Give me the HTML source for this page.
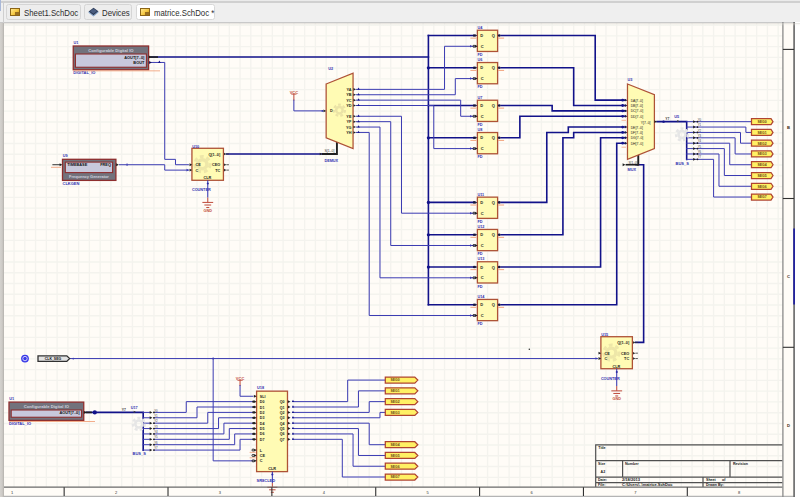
<!DOCTYPE html>
<html><head><meta charset="utf-8"><style>
html,body{margin:0;padding:0;width:800px;height:497px;overflow:hidden;background:#ffffff;}
body{position:relative;font-family:"Liberation Sans",sans-serif;}
#bar{position:absolute;left:0;top:0;width:800px;height:23px;background:#efefef;}
#bar:before{content:"";position:absolute;left:0;top:0;width:800px;height:1px;background:#ebebeb;}
#bar:after{content:"";position:absolute;left:0;top:1.4px;width:800px;height:1.2px;background:#d0d0d0;}
#barline{position:absolute;left:0;top:21.6px;width:800px;height:1.4px;background:#c9c9c9;}
#shadow{position:absolute;left:0;top:23px;width:800px;height:3px;background:linear-gradient(to bottom,rgba(200,198,192,0.55),rgba(230,228,222,0.25) 50%,rgba(255,253,248,0));}
.tab{position:absolute;top:3.7px;height:16.1px;box-sizing:border-box;border:1px solid #d5d5d5;border-radius:2.5px;background:#ededed;}
.tab.act{background:#ffffff;border-color:#d8d8d8;}
.tt{position:absolute;top:3.0px;font-size:8.6px;line-height:11px;color:#2c2c2c;white-space:nowrap;transform:scaleX(0.908);transform-origin:0 0;}
.ic{position:absolute;left:3.1px;top:3.3px;width:9.9px;height:7.9px;box-sizing:border-box;}
.ic.y{background:linear-gradient(135deg,#ffe890 0%,#f5c842 55%,#c89418 100%);border:1px solid #8a6418;}
.ic.y:after{content:"";position:absolute;right:0;bottom:0;width:4px;height:3px;background:#9a7020;}
.dv{position:absolute;left:3.5px;top:2.2px;}
#left{position:absolute;left:0;top:23px;width:4px;height:474px;background:linear-gradient(to right,#d4d2ce 0%,#cdcac6 55%,#b4b1ac 100%);}
#leftblue{position:absolute;left:0;top:0;width:0.9px;height:11px;background:#a9b8d8;}
#barleft{position:absolute;left:3.2px;top:1.5px;width:0.9px;height:21px;background:#cfcfcf;}
svg#sch{position:absolute;left:0;top:0;}
</style></head><body>
<div id="bar"></div><div id="barline"></div>
<div id="leftblue"></div><div id="barleft"></div>
<div class="tab" style="left:6.3px;width:74.4px;"><span class="ic y"></span><span class="tt" style="left:16.6px">Sheet1.SchDoc</span></div>
<div class="tab" style="left:83.7px;width:47.9px;"><svg class="dv" width="11" height="10" viewBox="0 0 11 10"><path d="M5.5 0.8L10.4 4.2L5.5 8.6L0.6 4.6Z" fill="#2b3a55"/><path d="M0.6 4.6L5.5 8.6L10.4 4.2L10.4 5.6L5.5 9.6L0.6 5.8Z" fill="#7a9cc8"/><path d="M5.5 1.5L9 4.1L5.5 6.8L2 4.3Z" fill="#4a5d80"/></svg><span class="tt" style="left:17.3px">Devices</span></div>
<div class="tab act" style="left:135.7px;width:79.8px;"><span class="ic y"></span><span class="tt" style="left:16.9px">matrice.SchDoc *</span></div>
<svg id="sch" width="800" height="497" viewBox="0 0 800 497">
<rect x="3.5" y="23" width="791" height="474" fill="#fffcf7"/>
<path d="M14.06 23V487 M24.82 23V487 M35.58 23V487 M46.35 23V487 M57.11 23V487 M67.87 23V487 M78.63 23V487 M89.39 23V487 M100.16 23V487 M110.92 23V487 M121.68 23V487 M132.44 23V487 M143.2 23V487 M153.97 23V487 M164.73 23V487 M175.49 23V487 M186.25 23V487 M197.01 23V487 M207.78 23V487 M218.54 23V487 M229.3 23V487 M240.06 23V487 M250.82 23V487 M261.59 23V487 M272.35 23V487 M283.11 23V487 M293.87 23V487 M304.63 23V487 M315.4 23V487 M326.16 23V487 M336.92 23V487 M347.68 23V487 M358.44 23V487 M369.21 23V487 M379.97 23V487 M390.73 23V487 M401.49 23V487 M412.25 23V487 M423.02 23V487 M433.78 23V487 M444.54 23V487 M455.3 23V487 M466.06 23V487 M476.83 23V487 M487.59 23V487 M498.35 23V487 M509.11 23V487 M519.87 23V487 M530.64 23V487 M541.4 23V487 M552.16 23V487 M562.92 23V487 M573.68 23V487 M584.45 23V487 M595.21 23V487 M605.97 23V487 M616.73 23V487 M627.49 23V487 M638.26 23V487 M649.02 23V487 M659.78 23V487 M670.54 23V487 M681.3 23V487 M692.07 23V487 M702.83 23V487 M713.59 23V487 M724.35 23V487 M735.11 23V487 M745.88 23V487 M756.64 23V487 M767.4 23V487 M778.16 23V487 M3 25.05H783 M3 35.82H783 M3 46.59H783 M3 57.35H783 M3 68.12H783 M3 78.89H783 M3 89.66H783 M3 100.43H783 M3 111.19H783 M3 121.96H783 M3 132.73H783 M3 143.5H783 M3 154.27H783 M3 165.03H783 M3 175.8H783 M3 186.57H783 M3 197.34H783 M3 208.11H783 M3 218.87H783 M3 229.64H783 M3 240.41H783 M3 251.18H783 M3 261.95H783 M3 272.71H783 M3 283.48H783 M3 294.25H783 M3 305.02H783 M3 315.79H783 M3 326.55H783 M3 337.32H783 M3 348.09H783 M3 358.86H783 M3 369.63H783 M3 380.39H783 M3 391.16H783 M3 401.93H783 M3 412.7H783 M3 423.47H783 M3 434.23H783 M3 445H783 M3 455.77H783 M3 466.54H783 M3 477.31H783" stroke="#f4f3ee" stroke-width="1.35" fill="none"/>
<polyline points="151.28,57.05 428.4,57.05" fill="none" stroke="#12128a" stroke-width="1.6" stroke-linejoin="miter" stroke-linecap="square"/>
<polyline points="148.59,57.05 157.19,57.05" fill="none" stroke="#202020" stroke-width="1.6" stroke-linejoin="miter" stroke-linecap="square"/>
<polyline points="428.4,35.52 428.4,304.72" fill="none" stroke="#12128a" stroke-width="1.6" stroke-linejoin="miter" stroke-linecap="square"/>
<polyline points="428.4,35.52 473.06,35.52" fill="none" stroke="#12128a" stroke-width="1.6" stroke-linejoin="miter" stroke-linecap="square"/>
<polyline points="428.4,67.82 473.06,67.82" fill="none" stroke="#12128a" stroke-width="1.6" stroke-linejoin="miter" stroke-linecap="square"/>
<polyline points="428.4,105.51 473.06,105.51" fill="none" stroke="#12128a" stroke-width="1.6" stroke-linejoin="miter" stroke-linecap="square"/>
<polyline points="428.4,137.81 473.06,137.81" fill="none" stroke="#12128a" stroke-width="1.6" stroke-linejoin="miter" stroke-linecap="square"/>
<polyline points="428.4,202.42 473.06,202.42" fill="none" stroke="#12128a" stroke-width="1.6" stroke-linejoin="miter" stroke-linecap="square"/>
<polyline points="428.4,234.73 473.06,234.73" fill="none" stroke="#12128a" stroke-width="1.6" stroke-linejoin="miter" stroke-linecap="square"/>
<polyline points="428.4,267.03 473.06,267.03" fill="none" stroke="#12128a" stroke-width="1.6" stroke-linejoin="miter" stroke-linecap="square"/>
<polyline points="428.4,304.72 473.06,304.72" fill="none" stroke="#12128a" stroke-width="1.6" stroke-linejoin="miter" stroke-linecap="square"/>
<circle cx="428.4" cy="67.82" r="1.6" fill="#12128a"/>
<circle cx="428.4" cy="137.81" r="1.6" fill="#12128a"/>
<circle cx="428.4" cy="202.42" r="1.6" fill="#12128a"/>
<circle cx="428.4" cy="234.73" r="1.6" fill="#12128a"/>
<circle cx="428.4" cy="267.03" r="1.6" fill="#12128a"/>
<polyline points="356.29,89.36 444.54,89.36 444.54,46.29 474.14,46.29" fill="none" stroke="#3b3bb2" stroke-width="1.0" stroke-linejoin="miter" stroke-linecap="square"/>
<polyline points="356.29,94.74 455.3,94.74 455.3,78.59 474.14,78.59" fill="none" stroke="#3b3bb2" stroke-width="1.0" stroke-linejoin="miter" stroke-linecap="square"/>
<polyline points="356.29,100.13 460.68,100.13 460.68,116.28 474.14,116.28" fill="none" stroke="#3b3bb2" stroke-width="1.0" stroke-linejoin="miter" stroke-linecap="square"/>
<polyline points="356.29,105.51 433.78,105.51 433.78,148.58 474.14,148.58" fill="none" stroke="#3b3bb2" stroke-width="1.0" stroke-linejoin="miter" stroke-linecap="square"/>
<polyline points="356.29,116.28 401.49,116.28 401.49,213.19 474.14,213.19" fill="none" stroke="#3b3bb2" stroke-width="1.0" stroke-linejoin="miter" stroke-linecap="square"/>
<polyline points="356.29,121.66 390.73,121.66 390.73,245.49 474.14,245.49" fill="none" stroke="#3b3bb2" stroke-width="1.0" stroke-linejoin="miter" stroke-linecap="square"/>
<polyline points="356.29,127.05 379.97,127.05 379.97,277.8 474.14,277.8" fill="none" stroke="#3b3bb2" stroke-width="1.0" stroke-linejoin="miter" stroke-linecap="square"/>
<polyline points="356.29,132.43 369.21,132.43 369.21,315.49 474.14,315.49" fill="none" stroke="#3b3bb2" stroke-width="1.0" stroke-linejoin="miter" stroke-linecap="square"/>
<polyline points="501.04,35.52 595.21,35.52 595.21,100.13 624.8,100.13" fill="none" stroke="#12128a" stroke-width="1.6" stroke-linejoin="miter" stroke-linecap="square"/>
<polyline points="501.04,67.82 573.68,67.82 573.68,105.51 624.8,105.51" fill="none" stroke="#12128a" stroke-width="1.6" stroke-linejoin="miter" stroke-linecap="square"/>
<polyline points="501.04,105.51 552.16,105.51 552.16,110.89 624.8,110.89" fill="none" stroke="#12128a" stroke-width="1.6" stroke-linejoin="miter" stroke-linecap="square"/>
<polyline points="501.04,137.81 519.87,137.81 519.87,116.28 624.8,116.28" fill="none" stroke="#12128a" stroke-width="1.6" stroke-linejoin="miter" stroke-linecap="square"/>
<polyline points="501.04,202.42 546.78,202.42 546.78,132.43 568.3,132.43 568.3,127.05 624.8,127.05" fill="none" stroke="#12128a" stroke-width="1.6" stroke-linejoin="miter" stroke-linecap="square"/>
<polyline points="501.04,234.73 562.92,234.73 562.92,137.81 573.68,137.81 573.68,132.43 624.8,132.43" fill="none" stroke="#12128a" stroke-width="1.6" stroke-linejoin="miter" stroke-linecap="square"/>
<polyline points="501.04,267.03 600.59,267.03 600.59,137.81 624.8,137.81" fill="none" stroke="#12128a" stroke-width="1.6" stroke-linejoin="miter" stroke-linecap="square"/>
<polyline points="501.04,304.72 616.73,304.72 616.73,143.2 624.8,143.2" fill="none" stroke="#12128a" stroke-width="1.6" stroke-linejoin="miter" stroke-linecap="square"/>
<polyline points="657.09,121.66 686.68,121.66 686.68,159.35" fill="none" stroke="#12128a" stroke-width="1.6" stroke-linejoin="miter" stroke-linecap="square"/>
<circle cx="663.55" cy="121.66" r="1.2" fill="#12128a"/>
<polyline points="686.68,121.66 697.45,121.66" fill="none" stroke="#3b3bb2" stroke-width="1.0" stroke-linejoin="miter" stroke-linecap="square"/>
<polyline points="686.68,127.05 697.45,127.05" fill="none" stroke="#3b3bb2" stroke-width="1.0" stroke-linejoin="miter" stroke-linecap="square"/>
<polyline points="686.68,132.43 697.45,132.43" fill="none" stroke="#3b3bb2" stroke-width="1.0" stroke-linejoin="miter" stroke-linecap="square"/>
<polyline points="686.68,137.81 697.45,137.81" fill="none" stroke="#3b3bb2" stroke-width="1.0" stroke-linejoin="miter" stroke-linecap="square"/>
<polyline points="686.68,143.2 697.45,143.2" fill="none" stroke="#3b3bb2" stroke-width="1.0" stroke-linejoin="miter" stroke-linecap="square"/>
<polyline points="686.68,148.58 697.45,148.58" fill="none" stroke="#3b3bb2" stroke-width="1.0" stroke-linejoin="miter" stroke-linecap="square"/>
<polyline points="686.68,153.97 697.45,153.97" fill="none" stroke="#3b3bb2" stroke-width="1.0" stroke-linejoin="miter" stroke-linecap="square"/>
<polyline points="686.68,159.35 697.45,159.35" fill="none" stroke="#3b3bb2" stroke-width="1.0" stroke-linejoin="miter" stroke-linecap="square"/>
<polyline points="697.45,121.66 751.26,121.66" fill="none" stroke="#3b3bb2" stroke-width="1.0" stroke-linejoin="miter" stroke-linecap="square"/>
<polyline points="697.45,127.05 745.88,127.05 745.88,132.43 751.26,132.43" fill="none" stroke="#3b3bb2" stroke-width="1.0" stroke-linejoin="miter" stroke-linecap="square"/>
<polyline points="697.45,132.43 740.5,132.43 740.5,143.2 751.26,143.2" fill="none" stroke="#3b3bb2" stroke-width="1.0" stroke-linejoin="miter" stroke-linecap="square"/>
<polyline points="697.45,137.81 735.11,137.81 735.11,153.97 751.26,153.97" fill="none" stroke="#3b3bb2" stroke-width="1.0" stroke-linejoin="miter" stroke-linecap="square"/>
<polyline points="697.45,143.2 729.73,143.2 729.73,164.73 751.26,164.73" fill="none" stroke="#3b3bb2" stroke-width="1.0" stroke-linejoin="miter" stroke-linecap="square"/>
<polyline points="697.45,148.58 724.35,148.58 724.35,175.5 751.26,175.5" fill="none" stroke="#3b3bb2" stroke-width="1.0" stroke-linejoin="miter" stroke-linecap="square"/>
<polyline points="697.45,153.97 718.97,153.97 718.97,186.27 751.26,186.27" fill="none" stroke="#3b3bb2" stroke-width="1.0" stroke-linejoin="miter" stroke-linecap="square"/>
<polyline points="697.45,159.35 713.59,159.35 713.59,197.04 751.26,197.04" fill="none" stroke="#3b3bb2" stroke-width="1.0" stroke-linejoin="miter" stroke-linecap="square"/>
<polyline points="635.57,342.41 643.64,342.41 643.64,164.73 636.1,164.73" fill="none" stroke="#12128a" stroke-width="1.6" stroke-linejoin="miter" stroke-linecap="square"/>
<polyline points="638.26,155.04 638.26,164.73" fill="none" stroke="#202020" stroke-width="1.9" stroke-linejoin="miter" stroke-linecap="square"/>
<polyline points="626.42,164.73 637.18,164.73" fill="none" stroke="#202020" stroke-width="1.6" stroke-linejoin="miter" stroke-linecap="square"/>
<path d="M622.64 163.29L625.34 164.73L622.64 166.17Z" fill="#202020"/>
<polyline points="226.61,153.97 321.85,153.97" fill="none" stroke="#12128a" stroke-width="1.6" stroke-linejoin="miter" stroke-linecap="square"/>
<polyline points="336.92,142.12 336.92,153.97 322.93,153.97" fill="none" stroke="#202020" stroke-width="1.9" stroke-linejoin="miter" stroke-linecap="square"/>
<path d="M319.75 152.69L322.15 153.97L319.75 155.25Z" fill="#202020"/>
<polyline points="293.87,94.2 293.87,100.13" fill="none" stroke="#bf4a3a" stroke-width="1.0" stroke-linejoin="miter" stroke-linecap="square"/>
<polyline points="293.87,100.13 293.87,110.89 322.93,110.89" fill="none" stroke="#3b3bb2" stroke-width="1.0" stroke-linejoin="miter" stroke-linecap="square"/>
<polyline points="149.66,62.44 164.73,62.44 164.73,159.35 175.49,159.35 175.49,164.73 188.4,164.73" fill="none" stroke="#3b3bb2" stroke-width="1.0" stroke-linejoin="miter" stroke-linecap="square"/>
<polyline points="119.53,164.73 164.73,164.73 164.73,170.12 188.4,170.12" fill="none" stroke="#3b3bb2" stroke-width="1.0" stroke-linejoin="miter" stroke-linecap="square"/>
<line x1="127.06" y1="163.43" x2="127.06" y2="166.03" stroke="#3b3bb2" stroke-width="0.9" />
<path d="M158.05 62.98L159.4 60.46L160.75 62.98Z" fill="#12128a"/>
<polyline points="69.48,358.56 597.36,358.56" fill="none" stroke="#3b3bb2" stroke-width="1.0" stroke-linejoin="miter" stroke-linecap="square"/>
<polyline points="213.16,358.56 213.16,460.85 252.98,460.85" fill="none" stroke="#3b3bb2" stroke-width="1.0" stroke-linejoin="miter" stroke-linecap="square"/>
<circle cx="213.16" cy="358.56" r="1" fill="#3b3bb2"/>
<circle cx="73.25" cy="358.56" r="0.9" fill="#3b3bb2"/>
<polyline points="86.7,412.4 143.2,412.4 143.2,450.09" fill="none" stroke="#12128a" stroke-width="1.6" stroke-linejoin="miter" stroke-linecap="square"/>
<polyline points="84.01,412.4 91.01,412.4" fill="none" stroke="#202020" stroke-width="1.6" stroke-linejoin="miter" stroke-linecap="square"/>
<circle cx="94.78" cy="412.4" r="2.1" fill="#12128a"/>
<polyline points="143.2,412.4 149.66,412.4" fill="none" stroke="#3b3bb2" stroke-width="1.0" stroke-linejoin="miter" stroke-linecap="square"/>
<polyline points="143.2,417.78 149.66,417.78" fill="none" stroke="#3b3bb2" stroke-width="1.0" stroke-linejoin="miter" stroke-linecap="square"/>
<polyline points="143.2,423.17 149.66,423.17" fill="none" stroke="#3b3bb2" stroke-width="1.0" stroke-linejoin="miter" stroke-linecap="square"/>
<polyline points="143.2,428.55 149.66,428.55" fill="none" stroke="#3b3bb2" stroke-width="1.0" stroke-linejoin="miter" stroke-linecap="square"/>
<polyline points="143.2,433.93 149.66,433.93" fill="none" stroke="#3b3bb2" stroke-width="1.0" stroke-linejoin="miter" stroke-linecap="square"/>
<polyline points="143.2,439.32 149.66,439.32" fill="none" stroke="#3b3bb2" stroke-width="1.0" stroke-linejoin="miter" stroke-linecap="square"/>
<polyline points="143.2,444.7 149.66,444.7" fill="none" stroke="#3b3bb2" stroke-width="1.0" stroke-linejoin="miter" stroke-linecap="square"/>
<polyline points="143.2,450.09 149.66,450.09" fill="none" stroke="#3b3bb2" stroke-width="1.0" stroke-linejoin="miter" stroke-linecap="square"/>
<polyline points="153.97,412.4 186.25,412.4 186.25,401.63 252.98,401.63" fill="none" stroke="#3b3bb2" stroke-width="1.0" stroke-linejoin="miter" stroke-linecap="square"/>
<polyline points="153.97,417.78 197.01,417.78 197.01,407.01 252.98,407.01" fill="none" stroke="#3b3bb2" stroke-width="1.0" stroke-linejoin="miter" stroke-linecap="square"/>
<polyline points="153.97,423.17 207.78,423.17 207.78,412.4 252.98,412.4" fill="none" stroke="#3b3bb2" stroke-width="1.0" stroke-linejoin="miter" stroke-linecap="square"/>
<polyline points="153.97,428.55 218.54,428.55 218.54,417.78 252.98,417.78" fill="none" stroke="#3b3bb2" stroke-width="1.0" stroke-linejoin="miter" stroke-linecap="square"/>
<polyline points="153.97,433.93 223.92,433.93 223.92,423.17 252.98,423.17" fill="none" stroke="#3b3bb2" stroke-width="1.0" stroke-linejoin="miter" stroke-linecap="square"/>
<polyline points="153.97,439.32 229.3,439.32 229.3,428.55 252.98,428.55" fill="none" stroke="#3b3bb2" stroke-width="1.0" stroke-linejoin="miter" stroke-linecap="square"/>
<polyline points="153.97,444.7 234.68,444.7 234.68,433.93 252.98,433.93" fill="none" stroke="#3b3bb2" stroke-width="1.0" stroke-linejoin="miter" stroke-linecap="square"/>
<polyline points="153.97,450.09 240.06,450.09 240.06,439.32 252.98,439.32" fill="none" stroke="#3b3bb2" stroke-width="1.0" stroke-linejoin="miter" stroke-linecap="square"/>
<polyline points="240.06,380.36 240.06,385.48" fill="none" stroke="#bf4a3a" stroke-width="1.0" stroke-linejoin="miter" stroke-linecap="square"/>
<polyline points="240.06,385.48 240.06,396.25 252.98,396.25" fill="none" stroke="#3b3bb2" stroke-width="1.0" stroke-linejoin="miter" stroke-linecap="square"/>
<polyline points="292.8,401.63 347.68,401.63 347.68,380.09 385.35,380.09" fill="none" stroke="#3b3bb2" stroke-width="1.0" stroke-linejoin="miter" stroke-linecap="square"/>
<polyline points="292.8,407.01 358.44,407.01 358.44,390.86 385.35,390.86" fill="none" stroke="#3b3bb2" stroke-width="1.0" stroke-linejoin="miter" stroke-linecap="square"/>
<polyline points="292.8,412.4 369.21,412.4 369.21,401.63 385.35,401.63" fill="none" stroke="#3b3bb2" stroke-width="1.0" stroke-linejoin="miter" stroke-linecap="square"/>
<polyline points="292.8,417.78 379.97,417.78 379.97,412.4 385.35,412.4" fill="none" stroke="#3b3bb2" stroke-width="1.0" stroke-linejoin="miter" stroke-linecap="square"/>
<polyline points="292.8,423.17 369.21,423.17 369.21,444.7 385.35,444.7" fill="none" stroke="#3b3bb2" stroke-width="1.0" stroke-linejoin="miter" stroke-linecap="square"/>
<polyline points="292.8,428.55 358.44,428.55 358.44,455.47 385.35,455.47" fill="none" stroke="#3b3bb2" stroke-width="1.0" stroke-linejoin="miter" stroke-linecap="square"/>
<polyline points="292.8,433.93 353.06,433.93 353.06,466.24 385.35,466.24" fill="none" stroke="#3b3bb2" stroke-width="1.0" stroke-linejoin="miter" stroke-linecap="square"/>
<polyline points="292.8,439.32 342.3,439.32 342.3,477.01 385.35,477.01" fill="none" stroke="#3b3bb2" stroke-width="1.0" stroke-linejoin="miter" stroke-linecap="square"/>
<rect x="477.4" y="30.23" width="20.2" height="21.24" fill="#fffbb4" stroke="#ae5236" stroke-width="1.3" />
<text x="477.4" y="28.63" font-size="3.8" fill="#3030b0" text-anchor="start" font-weight="bold" font-family="Liberation Sans, sans-serif" >U4</text>
<text x="477.4" y="56.07" font-size="3.8" fill="#3030b0" text-anchor="start" font-weight="bold" font-family="Liberation Sans, sans-serif" >FD</text>
<text x="480.3" y="37.02" font-size="4.0" fill="#1a1a1a" text-anchor="start" font-weight="bold" font-family="Liberation Sans, sans-serif" >D</text>
<text x="480.8" y="47.79" font-size="4.0" fill="#1a1a1a" text-anchor="start" font-weight="bold" font-family="Liberation Sans, sans-serif" >C</text>
<text x="494.8" y="37.02" font-size="4.0" fill="#1a1a1a" text-anchor="end" font-weight="bold" font-family="Liberation Sans, sans-serif" >Q</text>
<circle cx="474.2" cy="35.52" r="1.3" fill="#151540"/>
<path d="M475 34.24L477.4 35.52L475 36.8Z" fill="#202040"/>
<circle cx="474" cy="46.29" r="1.1" fill="none" stroke="#202020" stroke-width="0.9"/>
<path d="M475 44.85L477.7 46.29L475 47.73Z" fill="#202020"/>
<path d="M470 45.01L472.4 46.29L470 47.57Z" fill="#3b3bb2"/>
<circle cx="499.2" cy="35.52" r="1.3" fill="#151540"/>
<line x1="470.4" y1="38.12" x2="476.4" y2="38.12" stroke="#f2a47e" stroke-width="1.0" />
<line x1="498.1" y1="38.12" x2="504.1" y2="38.12" stroke="#f2a47e" stroke-width="1.0" />
<rect x="477.4" y="62.54" width="20.2" height="21.24" fill="#fffbb4" stroke="#ae5236" stroke-width="1.3" />
<text x="477.4" y="60.94" font-size="3.8" fill="#3030b0" text-anchor="start" font-weight="bold" font-family="Liberation Sans, sans-serif" >U6</text>
<text x="477.4" y="88.37" font-size="3.8" fill="#3030b0" text-anchor="start" font-weight="bold" font-family="Liberation Sans, sans-serif" >FD</text>
<text x="480.3" y="69.32" font-size="4.0" fill="#1a1a1a" text-anchor="start" font-weight="bold" font-family="Liberation Sans, sans-serif" >D</text>
<text x="480.8" y="80.09" font-size="4.0" fill="#1a1a1a" text-anchor="start" font-weight="bold" font-family="Liberation Sans, sans-serif" >C</text>
<text x="494.8" y="69.32" font-size="4.0" fill="#1a1a1a" text-anchor="end" font-weight="bold" font-family="Liberation Sans, sans-serif" >Q</text>
<circle cx="474.2" cy="67.82" r="1.3" fill="#151540"/>
<path d="M475 66.54L477.4 67.82L475 69.1Z" fill="#202040"/>
<circle cx="474" cy="78.59" r="1.1" fill="none" stroke="#202020" stroke-width="0.9"/>
<path d="M475 77.15L477.7 78.59L475 80.03Z" fill="#202020"/>
<path d="M470 77.31L472.4 78.59L470 79.87Z" fill="#3b3bb2"/>
<circle cx="499.2" cy="67.82" r="1.3" fill="#151540"/>
<line x1="470.4" y1="70.42" x2="476.4" y2="70.42" stroke="#f2a47e" stroke-width="1.0" />
<line x1="498.1" y1="70.42" x2="504.1" y2="70.42" stroke="#f2a47e" stroke-width="1.0" />
<rect x="477.4" y="100.23" width="20.2" height="21.24" fill="#fffbb4" stroke="#ae5236" stroke-width="1.3" />
<text x="477.4" y="98.63" font-size="3.8" fill="#3030b0" text-anchor="start" font-weight="bold" font-family="Liberation Sans, sans-serif" >U7</text>
<text x="477.4" y="126.06" font-size="3.8" fill="#3030b0" text-anchor="start" font-weight="bold" font-family="Liberation Sans, sans-serif" >FD</text>
<text x="480.3" y="107.01" font-size="4.0" fill="#1a1a1a" text-anchor="start" font-weight="bold" font-family="Liberation Sans, sans-serif" >D</text>
<text x="480.8" y="117.78" font-size="4.0" fill="#1a1a1a" text-anchor="start" font-weight="bold" font-family="Liberation Sans, sans-serif" >C</text>
<text x="494.8" y="107.01" font-size="4.0" fill="#1a1a1a" text-anchor="end" font-weight="bold" font-family="Liberation Sans, sans-serif" >Q</text>
<circle cx="474.2" cy="105.51" r="1.3" fill="#151540"/>
<path d="M475 104.23L477.4 105.51L475 106.79Z" fill="#202040"/>
<circle cx="474" cy="116.28" r="1.1" fill="none" stroke="#202020" stroke-width="0.9"/>
<path d="M475 114.84L477.7 116.28L475 117.72Z" fill="#202020"/>
<path d="M470 115L472.4 116.28L470 117.56Z" fill="#3b3bb2"/>
<circle cx="499.2" cy="105.51" r="1.3" fill="#151540"/>
<line x1="470.4" y1="108.11" x2="476.4" y2="108.11" stroke="#f2a47e" stroke-width="1.0" />
<line x1="498.1" y1="108.11" x2="504.1" y2="108.11" stroke="#f2a47e" stroke-width="1.0" />
<rect x="477.4" y="132.53" width="20.2" height="21.24" fill="#fffbb4" stroke="#ae5236" stroke-width="1.3" />
<text x="477.4" y="130.93" font-size="3.8" fill="#3030b0" text-anchor="start" font-weight="bold" font-family="Liberation Sans, sans-serif" >U8</text>
<text x="477.4" y="158.37" font-size="3.8" fill="#3030b0" text-anchor="start" font-weight="bold" font-family="Liberation Sans, sans-serif" >FD</text>
<text x="480.3" y="139.31" font-size="4.0" fill="#1a1a1a" text-anchor="start" font-weight="bold" font-family="Liberation Sans, sans-serif" >D</text>
<text x="480.8" y="150.08" font-size="4.0" fill="#1a1a1a" text-anchor="start" font-weight="bold" font-family="Liberation Sans, sans-serif" >C</text>
<text x="494.8" y="139.31" font-size="4.0" fill="#1a1a1a" text-anchor="end" font-weight="bold" font-family="Liberation Sans, sans-serif" >Q</text>
<circle cx="474.2" cy="137.81" r="1.3" fill="#151540"/>
<path d="M475 136.53L477.4 137.81L475 139.09Z" fill="#202040"/>
<circle cx="474" cy="148.58" r="1.1" fill="none" stroke="#202020" stroke-width="0.9"/>
<path d="M475 147.14L477.7 148.58L475 150.02Z" fill="#202020"/>
<path d="M470 147.3L472.4 148.58L470 149.86Z" fill="#3b3bb2"/>
<circle cx="499.2" cy="137.81" r="1.3" fill="#151540"/>
<line x1="470.4" y1="140.41" x2="476.4" y2="140.41" stroke="#f2a47e" stroke-width="1.0" />
<line x1="498.1" y1="140.41" x2="504.1" y2="140.41" stroke="#f2a47e" stroke-width="1.0" />
<rect x="477.4" y="197.14" width="20.2" height="21.24" fill="#fffbb4" stroke="#ae5236" stroke-width="1.3" />
<text x="477.4" y="195.54" font-size="3.8" fill="#3030b0" text-anchor="start" font-weight="bold" font-family="Liberation Sans, sans-serif" >U11</text>
<text x="477.4" y="222.97" font-size="3.8" fill="#3030b0" text-anchor="start" font-weight="bold" font-family="Liberation Sans, sans-serif" >FD</text>
<text x="480.3" y="203.92" font-size="4.0" fill="#1a1a1a" text-anchor="start" font-weight="bold" font-family="Liberation Sans, sans-serif" >D</text>
<text x="480.8" y="214.69" font-size="4.0" fill="#1a1a1a" text-anchor="start" font-weight="bold" font-family="Liberation Sans, sans-serif" >C</text>
<text x="494.8" y="203.92" font-size="4.0" fill="#1a1a1a" text-anchor="end" font-weight="bold" font-family="Liberation Sans, sans-serif" >Q</text>
<circle cx="474.2" cy="202.42" r="1.3" fill="#151540"/>
<path d="M475 201.14L477.4 202.42L475 203.7Z" fill="#202040"/>
<circle cx="474" cy="213.19" r="1.1" fill="none" stroke="#202020" stroke-width="0.9"/>
<path d="M475 211.75L477.7 213.19L475 214.63Z" fill="#202020"/>
<path d="M470 211.91L472.4 213.19L470 214.47Z" fill="#3b3bb2"/>
<circle cx="499.2" cy="202.42" r="1.3" fill="#151540"/>
<line x1="470.4" y1="205.02" x2="476.4" y2="205.02" stroke="#f2a47e" stroke-width="1.0" />
<line x1="498.1" y1="205.02" x2="504.1" y2="205.02" stroke="#f2a47e" stroke-width="1.0" />
<rect x="477.4" y="229.44" width="20.2" height="21.24" fill="#fffbb4" stroke="#ae5236" stroke-width="1.3" />
<text x="477.4" y="227.84" font-size="3.8" fill="#3030b0" text-anchor="start" font-weight="bold" font-family="Liberation Sans, sans-serif" >U12</text>
<text x="477.4" y="255.28" font-size="3.8" fill="#3030b0" text-anchor="start" font-weight="bold" font-family="Liberation Sans, sans-serif" >FD</text>
<text x="480.3" y="236.23" font-size="4.0" fill="#1a1a1a" text-anchor="start" font-weight="bold" font-family="Liberation Sans, sans-serif" >D</text>
<text x="480.8" y="246.99" font-size="4.0" fill="#1a1a1a" text-anchor="start" font-weight="bold" font-family="Liberation Sans, sans-serif" >C</text>
<text x="494.8" y="236.23" font-size="4.0" fill="#1a1a1a" text-anchor="end" font-weight="bold" font-family="Liberation Sans, sans-serif" >Q</text>
<circle cx="474.2" cy="234.73" r="1.3" fill="#151540"/>
<path d="M475 233.45L477.4 234.73L475 236.01Z" fill="#202040"/>
<circle cx="474" cy="245.49" r="1.1" fill="none" stroke="#202020" stroke-width="0.9"/>
<path d="M475 244.05L477.7 245.49L475 246.93Z" fill="#202020"/>
<path d="M470 244.21L472.4 245.49L470 246.77Z" fill="#3b3bb2"/>
<circle cx="499.2" cy="234.73" r="1.3" fill="#151540"/>
<line x1="470.4" y1="237.33" x2="476.4" y2="237.33" stroke="#f2a47e" stroke-width="1.0" />
<line x1="498.1" y1="237.33" x2="504.1" y2="237.33" stroke="#f2a47e" stroke-width="1.0" />
<rect x="477.4" y="261.75" width="20.2" height="21.24" fill="#fffbb4" stroke="#ae5236" stroke-width="1.3" />
<text x="477.4" y="260.15" font-size="3.8" fill="#3030b0" text-anchor="start" font-weight="bold" font-family="Liberation Sans, sans-serif" >U13</text>
<text x="477.4" y="287.58" font-size="3.8" fill="#3030b0" text-anchor="start" font-weight="bold" font-family="Liberation Sans, sans-serif" >FD</text>
<text x="480.3" y="268.53" font-size="4.0" fill="#1a1a1a" text-anchor="start" font-weight="bold" font-family="Liberation Sans, sans-serif" >D</text>
<text x="480.8" y="279.3" font-size="4.0" fill="#1a1a1a" text-anchor="start" font-weight="bold" font-family="Liberation Sans, sans-serif" >C</text>
<text x="494.8" y="268.53" font-size="4.0" fill="#1a1a1a" text-anchor="end" font-weight="bold" font-family="Liberation Sans, sans-serif" >Q</text>
<circle cx="474.2" cy="267.03" r="1.3" fill="#151540"/>
<path d="M475 265.75L477.4 267.03L475 268.31Z" fill="#202040"/>
<circle cx="474" cy="277.8" r="1.1" fill="none" stroke="#202020" stroke-width="0.9"/>
<path d="M475 276.36L477.7 277.8L475 279.24Z" fill="#202020"/>
<path d="M470 276.52L472.4 277.8L470 279.08Z" fill="#3b3bb2"/>
<circle cx="499.2" cy="267.03" r="1.3" fill="#151540"/>
<line x1="470.4" y1="269.63" x2="476.4" y2="269.63" stroke="#f2a47e" stroke-width="1.0" />
<line x1="498.1" y1="269.63" x2="504.1" y2="269.63" stroke="#f2a47e" stroke-width="1.0" />
<rect x="477.4" y="299.43" width="20.2" height="21.24" fill="#fffbb4" stroke="#ae5236" stroke-width="1.3" />
<text x="477.4" y="297.83" font-size="3.8" fill="#3030b0" text-anchor="start" font-weight="bold" font-family="Liberation Sans, sans-serif" >U14</text>
<text x="477.4" y="325.27" font-size="3.8" fill="#3030b0" text-anchor="start" font-weight="bold" font-family="Liberation Sans, sans-serif" >FD</text>
<text x="480.3" y="306.22" font-size="4.0" fill="#1a1a1a" text-anchor="start" font-weight="bold" font-family="Liberation Sans, sans-serif" >D</text>
<text x="480.8" y="316.99" font-size="4.0" fill="#1a1a1a" text-anchor="start" font-weight="bold" font-family="Liberation Sans, sans-serif" >C</text>
<text x="494.8" y="306.22" font-size="4.0" fill="#1a1a1a" text-anchor="end" font-weight="bold" font-family="Liberation Sans, sans-serif" >Q</text>
<circle cx="474.2" cy="304.72" r="1.3" fill="#151540"/>
<path d="M475 303.44L477.4 304.72L475 306Z" fill="#202040"/>
<circle cx="474" cy="315.49" r="1.1" fill="none" stroke="#202020" stroke-width="0.9"/>
<path d="M475 314.05L477.7 315.49L475 316.93Z" fill="#202020"/>
<path d="M470 314.21L472.4 315.49L470 316.77Z" fill="#3b3bb2"/>
<circle cx="499.2" cy="304.72" r="1.3" fill="#151540"/>
<line x1="470.4" y1="307.32" x2="476.4" y2="307.32" stroke="#f2a47e" stroke-width="1.0" />
<line x1="498.1" y1="307.32" x2="504.1" y2="307.32" stroke="#f2a47e" stroke-width="1.0" />
<path d="M326.16 83.97L353.06 73.21L353.06 148.58L326.16 137.81Z" fill="#fffbb4" stroke="#ae5236" stroke-width="1.25"/>
<g opacity="1.0"><circle cx="339.4" cy="110.2" r="5.52" fill="none" stroke="#ebe3a6" stroke-width="2.27" stroke-dasharray="2.73 2.08"/>
<circle cx="339.4" cy="110.2" r="3.25" fill="none" stroke="#ebe3a6" stroke-width="2.47"/></g>
<text x="328.31" y="69.98" font-size="3.8" fill="#3030b0" text-anchor="start" font-weight="bold" font-family="Liberation Sans, sans-serif" >U2</text>
<text x="351.45" y="90.86" font-size="3.8" fill="#1a1a1a" text-anchor="end" font-weight="bold" font-family="Liberation Sans, sans-serif" >YA</text>
<path d="M353.46 88.08L355.86 89.36L353.46 90.64Z" fill="#202020"/>
<path d="M357.36 89.84L358.56 87.6L359.76 89.84Z" fill="#12128a"/>
<text x="351.45" y="96.24" font-size="3.8" fill="#1a1a1a" text-anchor="end" font-weight="bold" font-family="Liberation Sans, sans-serif" >YB</text>
<path d="M353.46 93.46L355.86 94.74L353.46 96.02Z" fill="#202020"/>
<path d="M357.36 95.22L358.56 92.98L359.76 95.22Z" fill="#12128a"/>
<text x="351.45" y="101.63" font-size="3.8" fill="#1a1a1a" text-anchor="end" font-weight="bold" font-family="Liberation Sans, sans-serif" >YC</text>
<path d="M353.46 98.85L355.86 100.13L353.46 101.41Z" fill="#202020"/>
<path d="M357.36 100.61L358.56 98.37L359.76 100.61Z" fill="#12128a"/>
<text x="351.45" y="107.01" font-size="3.8" fill="#1a1a1a" text-anchor="end" font-weight="bold" font-family="Liberation Sans, sans-serif" >YD</text>
<path d="M353.46 104.23L355.86 105.51L353.46 106.79Z" fill="#202020"/>
<path d="M357.36 105.99L358.56 103.75L359.76 105.99Z" fill="#12128a"/>
<text x="351.45" y="117.78" font-size="3.8" fill="#1a1a1a" text-anchor="end" font-weight="bold" font-family="Liberation Sans, sans-serif" >YE</text>
<path d="M353.46 115L355.86 116.28L353.46 117.56Z" fill="#202020"/>
<path d="M357.36 116.76L358.56 114.52L359.76 116.76Z" fill="#12128a"/>
<text x="351.45" y="123.16" font-size="3.8" fill="#1a1a1a" text-anchor="end" font-weight="bold" font-family="Liberation Sans, sans-serif" >YF</text>
<path d="M353.46 120.38L355.86 121.66L353.46 122.94Z" fill="#202020"/>
<path d="M357.36 122.14L358.56 119.9L359.76 122.14Z" fill="#12128a"/>
<text x="351.45" y="128.55" font-size="3.8" fill="#1a1a1a" text-anchor="end" font-weight="bold" font-family="Liberation Sans, sans-serif" >YG</text>
<path d="M353.46 125.77L355.86 127.05L353.46 128.33Z" fill="#202020"/>
<path d="M357.36 127.53L358.56 125.29L359.76 127.53Z" fill="#12128a"/>
<text x="351.45" y="133.93" font-size="3.8" fill="#1a1a1a" text-anchor="end" font-weight="bold" font-family="Liberation Sans, sans-serif" >YH</text>
<path d="M353.46 131.15L355.86 132.43L353.46 133.71Z" fill="#202020"/>
<path d="M357.36 132.91L358.56 130.67L359.76 132.91Z" fill="#12128a"/>
<text x="329.92" y="112.39" font-size="3.8" fill="#1a1a1a" text-anchor="start" font-weight="bold" font-family="Liberation Sans, sans-serif" >D</text>
<path d="M323.46 109.45L326.16 110.89L323.46 112.33Z" fill="#202020"/>
<circle cx="322.39" cy="110.89" r="0.9" fill="#3b3bb2"/>
<text x="324.4" y="151.6" font-size="3.5" fill="#404040" text-anchor="start" font-weight="normal" font-family="Liberation Sans, sans-serif" >S[1..0]</text>
<text x="324.4" y="161.5" font-size="3.8" fill="#3030b0" text-anchor="start" font-weight="bold" font-family="Liberation Sans, sans-serif" >DEMUX</text>
<line x1="291.27" y1="94.2" x2="296.47" y2="94.2" stroke="#bf4a3a" stroke-width="0.8" />
<text x="293.87" y="94.2" font-size="4.0" fill="#bf4a3a" text-anchor="middle" font-weight="bold" font-family="Liberation Sans, sans-serif" >VCC</text>
<path d="M627.49 83.97L654.4 94.74L654.4 148.58L627.49 159.35Z" fill="#fffbb4" stroke="#ae5236" stroke-width="1.25"/>
<text x="627.49" y="80.74" font-size="3.8" fill="#3030b0" text-anchor="start" font-weight="bold" font-family="Liberation Sans, sans-serif" >U3</text>
<text x="630.68" y="101.63" font-size="3.4" fill="#1a1a1a" text-anchor="start" font-weight="normal" font-family="Liberation Sans, sans-serif" >DA[7..0]</text>
<circle cx="622.65" cy="100.13" r="1.4" fill="#12128a"/>
<path d="M624.79 98.69L627.49 100.13L624.79 101.57Z" fill="#202040"/>
<text x="630.68" y="107.01" font-size="3.4" fill="#1a1a1a" text-anchor="start" font-weight="normal" font-family="Liberation Sans, sans-serif" >DB[7..0]</text>
<circle cx="622.65" cy="105.51" r="1.4" fill="#12128a"/>
<path d="M624.79 104.07L627.49 105.51L624.79 106.95Z" fill="#202040"/>
<text x="630.68" y="112.39" font-size="3.4" fill="#1a1a1a" text-anchor="start" font-weight="normal" font-family="Liberation Sans, sans-serif" >DC[7..0]</text>
<circle cx="622.65" cy="110.89" r="1.4" fill="#12128a"/>
<path d="M624.79 109.45L627.49 110.89L624.79 112.33Z" fill="#202040"/>
<text x="630.68" y="117.78" font-size="3.4" fill="#1a1a1a" text-anchor="start" font-weight="normal" font-family="Liberation Sans, sans-serif" >DD[7..0]</text>
<circle cx="622.65" cy="116.28" r="1.4" fill="#12128a"/>
<path d="M624.79 114.84L627.49 116.28L624.79 117.72Z" fill="#202040"/>
<text x="630.68" y="128.55" font-size="3.4" fill="#1a1a1a" text-anchor="start" font-weight="normal" font-family="Liberation Sans, sans-serif" >DE[7..0]</text>
<circle cx="622.65" cy="127.05" r="1.4" fill="#12128a"/>
<path d="M624.79 125.61L627.49 127.05L624.79 128.49Z" fill="#202040"/>
<text x="630.68" y="133.93" font-size="3.4" fill="#1a1a1a" text-anchor="start" font-weight="normal" font-family="Liberation Sans, sans-serif" >DF[7..0]</text>
<circle cx="622.65" cy="132.43" r="1.4" fill="#12128a"/>
<path d="M624.79 130.99L627.49 132.43L624.79 133.87Z" fill="#202040"/>
<text x="630.68" y="139.31" font-size="3.4" fill="#1a1a1a" text-anchor="start" font-weight="normal" font-family="Liberation Sans, sans-serif" >DG[7..0]</text>
<circle cx="622.65" cy="137.81" r="1.4" fill="#12128a"/>
<path d="M624.79 136.37L627.49 137.81L624.79 139.25Z" fill="#202040"/>
<text x="630.68" y="144.7" font-size="3.4" fill="#1a1a1a" text-anchor="start" font-weight="normal" font-family="Liberation Sans, sans-serif" >DH[7..0]</text>
<circle cx="622.65" cy="143.2" r="1.4" fill="#12128a"/>
<path d="M624.79 141.76L627.49 143.2L624.79 144.64Z" fill="#202040"/>
<text x="650.5" y="123.56" font-size="3.4" fill="#1a1a1a" text-anchor="end" font-weight="normal" font-family="Liberation Sans, sans-serif" >Y[7..0]</text>
<path d="M654.4 120.22L657.1 121.66L654.4 123.1Z" fill="#202020"/>
<text x="628.57" y="163.83" font-size="3.0" fill="#303030" text-anchor="start" font-weight="normal" font-family="Liberation Sans, sans-serif" >S[1..0]</text>
<text x="627.5" y="170.8" font-size="3.8" fill="#3030b0" text-anchor="start" font-weight="bold" font-family="Liberation Sans, sans-serif" >MUX</text>
<line x1="621.5" y1="120.3" x2="626" y2="120.3" stroke="#f2a47e" stroke-width="0.8" />
<line x1="621.5" y1="147.2" x2="626" y2="147.2" stroke="#f2a47e" stroke-width="0.8" />
<rect x="191.93" y="148.28" width="31.49" height="32" fill="#fffbb4" stroke="#ae5236" stroke-width="1.3" />
<g opacity="1.0"><circle cx="202.4" cy="164.2" r="7.65" fill="none" stroke="#eee7a8" stroke-width="3.15" stroke-dasharray="3.78 2.88"/>
<circle cx="202.4" cy="164.2" r="4.5" fill="none" stroke="#eee7a8" stroke-width="3.42"/></g>
<text x="192.23" y="147.68" font-size="3.8" fill="#3030b0" text-anchor="start" font-weight="bold" font-family="Liberation Sans, sans-serif" >U10</text>
<text x="220.22" y="155.57" font-size="3.8" fill="#1a1a1a" text-anchor="end" font-weight="bold" font-family="Liberation Sans, sans-serif" >Q[1..0]</text>
<text x="195.53" y="166.23" font-size="3.8" fill="#1a1a1a" text-anchor="start" font-weight="bold" font-family="Liberation Sans, sans-serif" >CE</text>
<text x="195.53" y="171.62" font-size="3.8" fill="#1a1a1a" text-anchor="start" font-weight="bold" font-family="Liberation Sans, sans-serif" >C</text>
<text x="220.22" y="166.23" font-size="3.8" fill="#1a1a1a" text-anchor="end" font-weight="bold" font-family="Liberation Sans, sans-serif" >CEO</text>
<text x="220.22" y="171.62" font-size="3.8" fill="#1a1a1a" text-anchor="end" font-weight="bold" font-family="Liberation Sans, sans-serif" >TC</text>
<text x="207.48" y="179.09" font-size="3.8" fill="#1a1a1a" text-anchor="middle" font-weight="bold" font-family="Liberation Sans, sans-serif" >CLR</text>
<path d="M189.53 163.29L192.23 164.73L189.53 166.17Z" fill="#202020"/>
<path d="M189.53 168.68L192.23 170.12L189.53 171.56Z" fill="#202020"/>
<path d="M186.53 168.84L188.93 170.12L186.53 171.4Z" fill="#3b3bb2"/>
<path d="M224.02 152.69L226.42 153.97L224.02 155.25Z" fill="#303030"/>
<line x1="226.42" y1="153.97" x2="228.92" y2="153.97" stroke="#303030" stroke-width="0.8" />
<path d="M224.02 163.45L226.42 164.73L224.02 166.01Z" fill="#303030"/>
<line x1="226.42" y1="164.73" x2="228.92" y2="164.73" stroke="#303030" stroke-width="0.8" />
<path d="M224.02 168.84L226.42 170.12L224.02 171.4Z" fill="#303030"/>
<line x1="226.42" y1="170.12" x2="228.92" y2="170.12" stroke="#303030" stroke-width="0.8" />
<text x="191.93" y="191.12" font-size="3.8" fill="#3030b0" text-anchor="start" font-weight="bold" font-family="Liberation Sans, sans-serif" >COUNTER</text>
<circle cx="207.78" cy="183.49" r="1" fill="#12128a"/>
<line x1="207.78" y1="180.29" x2="207.78" y2="197.58" stroke="#3030b0" stroke-width="1.0" />
<line x1="207.78" y1="197.58" x2="207.78" y2="202.42" stroke="#bf4a3a" stroke-width="1.0" />
<line x1="202.38" y1="202.42" x2="213.18" y2="202.42" stroke="#bf4a3a" stroke-width="1.0" />
<line x1="204.38" y1="205.02" x2="211.18" y2="205.02" stroke="#bf4a3a" stroke-width="1.0" />
<line x1="206.28" y1="207.52" x2="209.28" y2="207.52" stroke="#bf4a3a" stroke-width="1.0" />
<text x="207.78" y="212.02" font-size="3.8" fill="#bf4a3a" text-anchor="middle" font-weight="bold" font-family="Liberation Sans, sans-serif" >GND</text>
<rect x="600.89" y="336.72" width="31.49" height="32" fill="#fffbb4" stroke="#ae5236" stroke-width="1.3" />
<g opacity="1.0"><circle cx="611.35" cy="352.64" r="7.65" fill="none" stroke="#eee7a8" stroke-width="3.15" stroke-dasharray="3.78 2.88"/>
<circle cx="611.35" cy="352.64" r="4.5" fill="none" stroke="#eee7a8" stroke-width="3.42"/></g>
<text x="601.19" y="336.12" font-size="3.8" fill="#3030b0" text-anchor="start" font-weight="bold" font-family="Liberation Sans, sans-serif" >U15</text>
<text x="629.17" y="344.01" font-size="3.8" fill="#1a1a1a" text-anchor="end" font-weight="bold" font-family="Liberation Sans, sans-serif" >Q[1..0]</text>
<text x="604.49" y="354.67" font-size="3.8" fill="#1a1a1a" text-anchor="start" font-weight="bold" font-family="Liberation Sans, sans-serif" >CE</text>
<text x="604.49" y="360.06" font-size="3.8" fill="#1a1a1a" text-anchor="start" font-weight="bold" font-family="Liberation Sans, sans-serif" >C</text>
<text x="629.17" y="354.67" font-size="3.8" fill="#1a1a1a" text-anchor="end" font-weight="bold" font-family="Liberation Sans, sans-serif" >CEO</text>
<text x="629.17" y="360.06" font-size="3.8" fill="#1a1a1a" text-anchor="end" font-weight="bold" font-family="Liberation Sans, sans-serif" >TC</text>
<text x="616.43" y="367.53" font-size="3.8" fill="#1a1a1a" text-anchor="middle" font-weight="bold" font-family="Liberation Sans, sans-serif" >CLR</text>
<path d="M598.49 351.73L601.19 353.17L598.49 354.61Z" fill="#202020"/>
<path d="M598.49 357.12L601.19 358.56L598.49 360Z" fill="#202020"/>
<path d="M595.49 357.28L597.89 358.56L595.49 359.84Z" fill="#3b3bb2"/>
<path d="M632.98 341.13L635.38 342.41L632.98 343.69Z" fill="#303030"/>
<line x1="635.38" y1="342.41" x2="637.88" y2="342.41" stroke="#303030" stroke-width="0.8" />
<path d="M632.98 351.89L635.38 353.17L632.98 354.45Z" fill="#303030"/>
<line x1="635.38" y1="353.17" x2="637.88" y2="353.17" stroke="#303030" stroke-width="0.8" />
<path d="M632.98 357.28L635.38 358.56L632.98 359.84Z" fill="#303030"/>
<line x1="635.38" y1="358.56" x2="637.88" y2="358.56" stroke="#303030" stroke-width="0.8" />
<text x="600.89" y="379.56" font-size="3.8" fill="#3030b0" text-anchor="start" font-weight="bold" font-family="Liberation Sans, sans-serif" >COUNTER</text>
<circle cx="616.73" cy="371.93" r="1" fill="#12128a"/>
<line x1="616.73" y1="368.73" x2="616.73" y2="386.02" stroke="#3030b0" stroke-width="1.0" />
<line x1="616.73" y1="386.02" x2="616.73" y2="390.86" stroke="#bf4a3a" stroke-width="1.0" />
<line x1="611.33" y1="390.86" x2="622.13" y2="390.86" stroke="#bf4a3a" stroke-width="1.0" />
<line x1="613.33" y1="393.46" x2="620.13" y2="393.46" stroke="#bf4a3a" stroke-width="1.0" />
<line x1="615.23" y1="395.96" x2="618.23" y2="395.96" stroke="#bf4a3a" stroke-width="1.0" />
<text x="616.73" y="400.46" font-size="3.8" fill="#bf4a3a" text-anchor="middle" font-weight="bold" font-family="Liberation Sans, sans-serif" >GND</text>
<rect x="73.25" y="46" width="75.35" height="23.75" fill="#72727c" stroke="#8e2e2e" stroke-width="1.3" />
<rect x="75.45" y="54" width="70.95" height="13.25" fill="#c8c8dc" stroke="#8e2e2e" stroke-width="1.1" />
<text x="110.92" y="51.8" font-size="4.2" fill="#d0d0dc" text-anchor="middle" font-weight="bold" font-family="Liberation Sans, sans-serif" >Configurable Digital IO</text>
<text x="144.4" y="58.65" font-size="3.9" fill="#101010" text-anchor="end" font-weight="bold" font-family="Liberation Sans, sans-serif" >AOUT[7..0]</text>
<path d="M148.8 55.61L151.5 57.05L148.8 58.49Z" fill="#202020"/>
<text x="144.4" y="64.04" font-size="3.9" fill="#101010" text-anchor="end" font-weight="bold" font-family="Liberation Sans, sans-serif" >BOUT</text>
<path d="M149.1 61L151.8 62.44L149.1 63.88Z" fill="#15155a"/>
<text x="73.55" y="43.8" font-size="3.8" fill="#3030b0" text-anchor="start" font-weight="bold" font-family="Liberation Sans, sans-serif" >U1</text>
<text x="73.25" y="74.35" font-size="4.0" fill="#3030b0" text-anchor="start" font-weight="bold" font-family="Liberation Sans, sans-serif" >DIGITAL_IO</text>
<line x1="73.25" y1="70.85" x2="160" y2="70.85" stroke="#f2a47e" stroke-width="0.9" />
<rect x="9" y="402.1" width="74.75" height="18.3" fill="#72727c" stroke="#8e2e2e" stroke-width="1.3" />
<rect x="11.2" y="410" width="70.35" height="7.25" fill="#c8c8dc" stroke="#8e2e2e" stroke-width="1.1" />
<text x="46.38" y="407.9" font-size="4.2" fill="#d0d0dc" text-anchor="middle" font-weight="bold" font-family="Liberation Sans, sans-serif" >Configurable Digital IO</text>
<text x="79.55" y="414" font-size="3.9" fill="#101010" text-anchor="end" font-weight="bold" font-family="Liberation Sans, sans-serif" >AOUT[7..0]</text>
<path d="M83.95 410.96L86.65 412.4L83.95 413.84Z" fill="#202020"/>
<text x="9.3" y="399.9" font-size="3.8" fill="#3030b0" text-anchor="start" font-weight="bold" font-family="Liberation Sans, sans-serif" >U1</text>
<text x="9" y="425" font-size="4.0" fill="#3030b0" text-anchor="start" font-weight="bold" font-family="Liberation Sans, sans-serif" >DIGITAL_IO</text>
<line x1="9" y1="421.5" x2="95" y2="421.5" stroke="#f2a47e" stroke-width="0.9" />
<rect x="62.5" y="159.3" width="53.4" height="21.1" fill="#72727c" stroke="#8e2e2e" stroke-width="1.3" />
<rect x="65.3" y="162.1" width="47.3" height="10.5" fill="#c8c8dc" stroke="#8e2e2e" stroke-width="1.1" />
<text x="67.2" y="166.33" font-size="3.9" fill="#101010" text-anchor="start" font-weight="bold" font-family="Liberation Sans, sans-serif" >TIMEBASE</text>
<text x="111" y="166.33" font-size="3.9" fill="#101010" text-anchor="end" font-weight="bold" font-family="Liberation Sans, sans-serif" >FREQ</text>
<text x="89" y="178" font-size="3.95" fill="#d0d0dc" text-anchor="middle" font-weight="bold" font-family="Liberation Sans, sans-serif" >Frequency Generator</text>
<text x="62.8" y="157.3" font-size="3.8" fill="#3030b0" text-anchor="start" font-weight="bold" font-family="Liberation Sans, sans-serif" >U9</text>
<text x="62.5" y="185" font-size="4.0" fill="#3030b0" text-anchor="start" font-weight="bold" font-family="Liberation Sans, sans-serif" >CLKGEN</text>
<line x1="52.4" y1="164.73" x2="60" y2="164.73" stroke="#202020" stroke-width="0.9" />
<path d="M59.6 163.29L62.3 164.73L59.6 166.17Z" fill="#202020"/>
<path d="M116.1 163.29L118.8 164.73L116.1 166.17Z" fill="#202020"/>
<line x1="51" y1="167.3" x2="61" y2="167.3" stroke="#f2a47e" stroke-width="0.9" />
<g opacity="1.0"><circle cx="682" cy="134.5" r="5.95" fill="none" stroke="#e6e6e6" stroke-width="2.45" stroke-dasharray="2.94 2.24"/>
<circle cx="682" cy="134.5" r="3.5" fill="none" stroke="#e6e6e6" stroke-width="2.66"/></g>
<path d="M693.14 120.22L695.84 121.66L693.14 123.1Z" fill="#202020"/>
<circle cx="697.45" cy="121.66" r="0.9" fill="#202020"/>
<text x="697.65" y="120.76" font-size="2.9" fill="#404040" text-anchor="start" font-weight="normal" font-family="Liberation Sans, sans-serif" >Y0</text>
<path d="M693.14 125.61L695.84 127.05L693.14 128.49Z" fill="#202020"/>
<circle cx="697.45" cy="127.05" r="0.9" fill="#202020"/>
<text x="697.65" y="126.15" font-size="2.9" fill="#404040" text-anchor="start" font-weight="normal" font-family="Liberation Sans, sans-serif" >Y1</text>
<path d="M693.14 130.99L695.84 132.43L693.14 133.87Z" fill="#202020"/>
<circle cx="697.45" cy="132.43" r="0.9" fill="#202020"/>
<text x="697.65" y="131.53" font-size="2.9" fill="#404040" text-anchor="start" font-weight="normal" font-family="Liberation Sans, sans-serif" >Y2</text>
<path d="M693.14 136.37L695.84 137.81L693.14 139.25Z" fill="#202020"/>
<circle cx="697.45" cy="137.81" r="0.9" fill="#202020"/>
<text x="697.65" y="136.91" font-size="2.9" fill="#404040" text-anchor="start" font-weight="normal" font-family="Liberation Sans, sans-serif" >Y3</text>
<path d="M693.14 141.76L695.84 143.2L693.14 144.64Z" fill="#202020"/>
<circle cx="697.45" cy="143.2" r="0.9" fill="#202020"/>
<text x="697.65" y="142.3" font-size="2.9" fill="#404040" text-anchor="start" font-weight="normal" font-family="Liberation Sans, sans-serif" >Y4</text>
<path d="M693.14 147.14L695.84 148.58L693.14 150.02Z" fill="#202020"/>
<circle cx="697.45" cy="148.58" r="0.9" fill="#202020"/>
<text x="697.65" y="147.68" font-size="2.9" fill="#404040" text-anchor="start" font-weight="normal" font-family="Liberation Sans, sans-serif" >Y5</text>
<path d="M693.14 152.53L695.84 153.97L693.14 155.41Z" fill="#202020"/>
<circle cx="697.45" cy="153.97" r="0.9" fill="#202020"/>
<text x="697.65" y="153.07" font-size="2.9" fill="#404040" text-anchor="start" font-weight="normal" font-family="Liberation Sans, sans-serif" >Y6</text>
<path d="M693.14 157.91L695.84 159.35L693.14 160.79Z" fill="#202020"/>
<circle cx="697.45" cy="159.35" r="0.9" fill="#202020"/>
<text x="697.65" y="158.45" font-size="2.9" fill="#404040" text-anchor="start" font-weight="normal" font-family="Liberation Sans, sans-serif" >Y7</text>
<text x="665.18" y="120.46" font-size="3.4" fill="#404040" text-anchor="start" font-weight="bold" font-family="Liberation Sans, sans-serif" >Y7</text>
<text x="674.18" y="118.06" font-size="3.8" fill="#3030b0" text-anchor="start" font-weight="bold" font-family="Liberation Sans, sans-serif" >U5</text>
<path d="M677.18 119.94L679.28 121.06L677.18 122.18Z" fill="#404040"/>
<text x="675.5" y="165" font-size="4.0" fill="#3030b0" text-anchor="start" font-weight="bold" font-family="Liberation Sans, sans-serif" >BUS_S</text>
<g opacity="1.0"><circle cx="138.8" cy="424" r="5.95" fill="none" stroke="#e6e6e6" stroke-width="2.45" stroke-dasharray="2.94 2.24"/>
<circle cx="138.8" cy="424" r="3.5" fill="none" stroke="#e6e6e6" stroke-width="2.66"/></g>
<path d="M149.66 410.96L152.36 412.4L149.66 413.84Z" fill="#202020"/>
<circle cx="153.97" cy="412.4" r="0.9" fill="#202020"/>
<text x="154.17" y="411.5" font-size="2.9" fill="#404040" text-anchor="start" font-weight="normal" font-family="Liberation Sans, sans-serif" >Y0</text>
<path d="M149.66 416.34L152.36 417.78L149.66 419.22Z" fill="#202020"/>
<circle cx="153.97" cy="417.78" r="0.9" fill="#202020"/>
<text x="154.17" y="416.88" font-size="2.9" fill="#404040" text-anchor="start" font-weight="normal" font-family="Liberation Sans, sans-serif" >Y1</text>
<path d="M149.66 421.73L152.36 423.17L149.66 424.61Z" fill="#202020"/>
<circle cx="153.97" cy="423.17" r="0.9" fill="#202020"/>
<text x="154.17" y="422.27" font-size="2.9" fill="#404040" text-anchor="start" font-weight="normal" font-family="Liberation Sans, sans-serif" >Y2</text>
<path d="M149.66 427.11L152.36 428.55L149.66 429.99Z" fill="#202020"/>
<circle cx="153.97" cy="428.55" r="0.9" fill="#202020"/>
<text x="154.17" y="427.65" font-size="2.9" fill="#404040" text-anchor="start" font-weight="normal" font-family="Liberation Sans, sans-serif" >Y3</text>
<path d="M149.66 432.49L152.36 433.93L149.66 435.37Z" fill="#202020"/>
<circle cx="153.97" cy="433.93" r="0.9" fill="#202020"/>
<text x="154.17" y="433.03" font-size="2.9" fill="#404040" text-anchor="start" font-weight="normal" font-family="Liberation Sans, sans-serif" >Y4</text>
<path d="M149.66 437.88L152.36 439.32L149.66 440.76Z" fill="#202020"/>
<circle cx="153.97" cy="439.32" r="0.9" fill="#202020"/>
<text x="154.17" y="438.42" font-size="2.9" fill="#404040" text-anchor="start" font-weight="normal" font-family="Liberation Sans, sans-serif" >Y5</text>
<path d="M149.66 443.26L152.36 444.7L149.66 446.14Z" fill="#202020"/>
<circle cx="153.97" cy="444.7" r="0.9" fill="#202020"/>
<text x="154.17" y="443.8" font-size="2.9" fill="#404040" text-anchor="start" font-weight="normal" font-family="Liberation Sans, sans-serif" >Y6</text>
<path d="M149.66 448.65L152.36 450.09L149.66 451.53Z" fill="#202020"/>
<circle cx="153.97" cy="450.09" r="0.9" fill="#202020"/>
<text x="154.17" y="449.19" font-size="2.9" fill="#404040" text-anchor="start" font-weight="normal" font-family="Liberation Sans, sans-serif" >Y7</text>
<text x="121.7" y="411.2" font-size="3.4" fill="#404040" text-anchor="start" font-weight="bold" font-family="Liberation Sans, sans-serif" >Y7</text>
<text x="130.7" y="408.8" font-size="3.8" fill="#3030b0" text-anchor="start" font-weight="bold" font-family="Liberation Sans, sans-serif" >U17</text>
<path d="M133.7 410.68L135.8 411.8L133.7 412.92Z" fill="#404040"/>
<text x="132.5" y="455" font-size="4.0" fill="#3030b0" text-anchor="start" font-weight="bold" font-family="Liberation Sans, sans-serif" >BUS_S</text>
<rect x="256.6" y="391.16" width="30.89" height="80.46" fill="#fffbb4" stroke="#ae5236" stroke-width="1.3" />
<text x="257.1" y="388.56" font-size="3.8" fill="#3030b0" text-anchor="start" font-weight="bold" font-family="Liberation Sans, sans-serif" >U18</text>
<text x="259.8" y="397.75" font-size="3.6" fill="#1a1a1a" text-anchor="start" font-weight="bold" font-family="Liberation Sans, sans-serif" >SLI</text>
<path d="M253.9 394.81L256.6 396.25L253.9 397.69Z" fill="#202020"/>
<text x="259.8" y="403.13" font-size="3.6" fill="#1a1a1a" text-anchor="start" font-weight="bold" font-family="Liberation Sans, sans-serif" >D0</text>
<path d="M253.9 400.19L256.6 401.63L253.9 403.07Z" fill="#202020"/>
<circle cx="253.3" cy="401.63" r="1.1" fill="#202020"/>
<text x="284.49" y="403.13" font-size="3.6" fill="#1a1a1a" text-anchor="end" font-weight="bold" font-family="Liberation Sans, sans-serif" >Q0</text>
<path d="M287.79 400.19L290.49 401.63L287.79 403.07Z" fill="#202020"/>
<path d="M291.79 402.11L292.99 399.87L294.19 402.11Z" fill="#12128a"/>
<text x="259.8" y="408.51" font-size="3.6" fill="#1a1a1a" text-anchor="start" font-weight="bold" font-family="Liberation Sans, sans-serif" >D1</text>
<path d="M253.9 405.57L256.6 407.01L253.9 408.45Z" fill="#202020"/>
<circle cx="253.3" cy="407.01" r="1.1" fill="#202020"/>
<text x="284.49" y="408.51" font-size="3.6" fill="#1a1a1a" text-anchor="end" font-weight="bold" font-family="Liberation Sans, sans-serif" >Q1</text>
<path d="M287.79 405.57L290.49 407.01L287.79 408.45Z" fill="#202020"/>
<path d="M291.79 407.49L292.99 405.25L294.19 407.49Z" fill="#12128a"/>
<text x="259.8" y="413.9" font-size="3.6" fill="#1a1a1a" text-anchor="start" font-weight="bold" font-family="Liberation Sans, sans-serif" >D2</text>
<path d="M253.9 410.96L256.6 412.4L253.9 413.84Z" fill="#202020"/>
<circle cx="253.3" cy="412.4" r="1.1" fill="#202020"/>
<text x="284.49" y="413.9" font-size="3.6" fill="#1a1a1a" text-anchor="end" font-weight="bold" font-family="Liberation Sans, sans-serif" >Q2</text>
<path d="M287.79 410.96L290.49 412.4L287.79 413.84Z" fill="#202020"/>
<path d="M291.79 412.88L292.99 410.64L294.19 412.88Z" fill="#12128a"/>
<text x="259.8" y="419.28" font-size="3.6" fill="#1a1a1a" text-anchor="start" font-weight="bold" font-family="Liberation Sans, sans-serif" >D3</text>
<path d="M253.9 416.34L256.6 417.78L253.9 419.22Z" fill="#202020"/>
<circle cx="253.3" cy="417.78" r="1.1" fill="#202020"/>
<text x="284.49" y="419.28" font-size="3.6" fill="#1a1a1a" text-anchor="end" font-weight="bold" font-family="Liberation Sans, sans-serif" >Q3</text>
<path d="M287.79 416.34L290.49 417.78L287.79 419.22Z" fill="#202020"/>
<path d="M291.79 418.26L292.99 416.02L294.19 418.26Z" fill="#12128a"/>
<text x="259.8" y="424.67" font-size="3.6" fill="#1a1a1a" text-anchor="start" font-weight="bold" font-family="Liberation Sans, sans-serif" >D4</text>
<path d="M253.9 421.73L256.6 423.17L253.9 424.61Z" fill="#202020"/>
<circle cx="253.3" cy="423.17" r="1.1" fill="#202020"/>
<text x="284.49" y="424.67" font-size="3.6" fill="#1a1a1a" text-anchor="end" font-weight="bold" font-family="Liberation Sans, sans-serif" >Q4</text>
<path d="M287.79 421.73L290.49 423.17L287.79 424.61Z" fill="#202020"/>
<path d="M291.79 423.65L292.99 421.41L294.19 423.65Z" fill="#12128a"/>
<text x="259.8" y="430.05" font-size="3.6" fill="#1a1a1a" text-anchor="start" font-weight="bold" font-family="Liberation Sans, sans-serif" >D5</text>
<path d="M253.9 427.11L256.6 428.55L253.9 429.99Z" fill="#202020"/>
<circle cx="253.3" cy="428.55" r="1.1" fill="#202020"/>
<text x="284.49" y="430.05" font-size="3.6" fill="#1a1a1a" text-anchor="end" font-weight="bold" font-family="Liberation Sans, sans-serif" >Q5</text>
<path d="M287.79 427.11L290.49 428.55L287.79 429.99Z" fill="#202020"/>
<path d="M291.79 429.03L292.99 426.79L294.19 429.03Z" fill="#12128a"/>
<text x="259.8" y="435.43" font-size="3.6" fill="#1a1a1a" text-anchor="start" font-weight="bold" font-family="Liberation Sans, sans-serif" >D6</text>
<path d="M253.9 432.49L256.6 433.93L253.9 435.37Z" fill="#202020"/>
<circle cx="253.3" cy="433.93" r="1.1" fill="#202020"/>
<text x="284.49" y="435.43" font-size="3.6" fill="#1a1a1a" text-anchor="end" font-weight="bold" font-family="Liberation Sans, sans-serif" >Q6</text>
<path d="M287.79 432.49L290.49 433.93L287.79 435.37Z" fill="#202020"/>
<path d="M291.79 434.41L292.99 432.17L294.19 434.41Z" fill="#12128a"/>
<text x="259.8" y="440.82" font-size="3.6" fill="#1a1a1a" text-anchor="start" font-weight="bold" font-family="Liberation Sans, sans-serif" >D7</text>
<path d="M253.9 437.88L256.6 439.32L253.9 440.76Z" fill="#202020"/>
<circle cx="253.3" cy="439.32" r="1.1" fill="#202020"/>
<text x="284.49" y="440.82" font-size="3.6" fill="#1a1a1a" text-anchor="end" font-weight="bold" font-family="Liberation Sans, sans-serif" >Q7</text>
<path d="M287.79 437.88L290.49 439.32L287.79 440.76Z" fill="#202020"/>
<path d="M291.79 439.8L292.99 437.56L294.19 439.8Z" fill="#12128a"/>
<text x="259.8" y="451.59" font-size="3.8" fill="#1a1a1a" text-anchor="start" font-weight="bold" font-family="Liberation Sans, sans-serif" >L</text>
<circle cx="253.1" cy="450.09" r="1.1" fill="none" stroke="#202020" stroke-width="0.9"/>
<path d="M254.1 448.65L256.8 450.09L254.1 451.53Z" fill="#202020"/>
<text x="259.8" y="456.97" font-size="3.8" fill="#1a1a1a" text-anchor="start" font-weight="bold" font-family="Liberation Sans, sans-serif" >CE</text>
<circle cx="253.1" cy="455.47" r="1.1" fill="none" stroke="#202020" stroke-width="0.9"/>
<path d="M254.1 454.03L256.8 455.47L254.1 456.91Z" fill="#202020"/>
<text x="259.8" y="462.35" font-size="3.8" fill="#1a1a1a" text-anchor="start" font-weight="bold" font-family="Liberation Sans, sans-serif" >C</text>
<circle cx="253.1" cy="460.85" r="1.1" fill="none" stroke="#202020" stroke-width="0.9"/>
<path d="M254.1 459.41L256.8 460.85L254.1 462.29Z" fill="#202020"/>
<line x1="249.6" y1="452.39" x2="255.6" y2="452.39" stroke="#f2a47e" stroke-width="0.8" />
<line x1="249.6" y1="457.77" x2="255.6" y2="457.77" stroke="#f2a47e" stroke-width="0.8" />
<text x="272.15" y="470.02" font-size="3.8" fill="#1a1a1a" text-anchor="middle" font-weight="bold" font-family="Liberation Sans, sans-serif" >CLR</text>
<text x="256.5" y="481.5" font-size="4.0" fill="#3030b0" text-anchor="start" font-weight="bold" font-family="Liberation Sans, sans-serif" >SR8CLED</text>
<circle cx="272.35" cy="474.5" r="1" fill="#12128a"/>
<line x1="272.35" y1="471.62" x2="272.35" y2="483" stroke="#3030b0" stroke-width="1.0" />
<line x1="272.35" y1="483" x2="272.35" y2="487" stroke="#bf4a3a" stroke-width="1.0" />
<line x1="267.35" y1="487.3" x2="277.35" y2="487.3" stroke="#bf4a3a" stroke-width="1.0" />
<line x1="269.15" y1="489.8" x2="275.55" y2="489.8" stroke="#bf4a3a" stroke-width="1.0" />
<line x1="270.85" y1="492.3" x2="273.85" y2="492.3" stroke="#bf4a3a" stroke-width="1.0" />
<line x1="237.46" y1="380.36" x2="242.66" y2="380.36" stroke="#bf4a3a" stroke-width="0.8" />
<text x="240.06" y="380.09" font-size="4.0" fill="#bf4a3a" text-anchor="middle" font-weight="bold" font-family="Liberation Sans, sans-serif" >VCC</text>
<path d="M751.5 118.66H771L773 121.66L771 124.66H751.5Z" fill="#fff064" stroke="#b04430" stroke-width="1.25"/>
<text x="757.5" y="123.06" font-size="3.4" fill="#6a4010" text-anchor="start" font-weight="bold" font-family="Liberation Sans, sans-serif" >SEG0</text>
<path d="M751.5 129.43H771L773 132.43L771 135.43H751.5Z" fill="#fff064" stroke="#b04430" stroke-width="1.25"/>
<text x="757.5" y="133.83" font-size="3.4" fill="#6a4010" text-anchor="start" font-weight="bold" font-family="Liberation Sans, sans-serif" >SEG1</text>
<path d="M751.5 140.2H771L773 143.2L771 146.2H751.5Z" fill="#fff064" stroke="#b04430" stroke-width="1.25"/>
<text x="757.5" y="144.6" font-size="3.4" fill="#6a4010" text-anchor="start" font-weight="bold" font-family="Liberation Sans, sans-serif" >SEG2</text>
<path d="M751.5 150.97H771L773 153.97L771 156.97H751.5Z" fill="#fff064" stroke="#b04430" stroke-width="1.25"/>
<text x="757.5" y="155.37" font-size="3.4" fill="#6a4010" text-anchor="start" font-weight="bold" font-family="Liberation Sans, sans-serif" >SEG3</text>
<path d="M751.5 161.73H771L773 164.73L771 167.73H751.5Z" fill="#fff064" stroke="#b04430" stroke-width="1.25"/>
<text x="757.5" y="166.13" font-size="3.4" fill="#6a4010" text-anchor="start" font-weight="bold" font-family="Liberation Sans, sans-serif" >SEG4</text>
<path d="M751.5 172.5H771L773 175.5L771 178.5H751.5Z" fill="#fff064" stroke="#b04430" stroke-width="1.25"/>
<text x="757.5" y="176.9" font-size="3.4" fill="#6a4010" text-anchor="start" font-weight="bold" font-family="Liberation Sans, sans-serif" >SEG5</text>
<path d="M751.5 183.27H771L773 186.27L771 189.27H751.5Z" fill="#fff064" stroke="#b04430" stroke-width="1.25"/>
<text x="757.5" y="187.67" font-size="3.4" fill="#6a4010" text-anchor="start" font-weight="bold" font-family="Liberation Sans, sans-serif" >SEG6</text>
<path d="M751.5 194.04H771L773 197.04L771 200.04H751.5Z" fill="#fff064" stroke="#b04430" stroke-width="1.25"/>
<text x="757.5" y="198.44" font-size="3.4" fill="#6a4010" text-anchor="start" font-weight="bold" font-family="Liberation Sans, sans-serif" >SEG7</text>
<path d="M385.3 377.09H414.8L417.8 380.09L414.8 383.09H385.3Z" fill="#fff064" stroke="#b04430" stroke-width="1.25"/>
<text x="390.6" y="381.49" font-size="3.4" fill="#6a4010" text-anchor="start" font-weight="bold" font-family="Liberation Sans, sans-serif" >SEG0</text>
<path d="M385.3 387.86H414.8L417.8 390.86L414.8 393.86H385.3Z" fill="#fff064" stroke="#b04430" stroke-width="1.25"/>
<text x="390.6" y="392.26" font-size="3.4" fill="#6a4010" text-anchor="start" font-weight="bold" font-family="Liberation Sans, sans-serif" >SEG1</text>
<path d="M385.3 398.63H414.8L417.8 401.63L414.8 404.63H385.3Z" fill="#fff064" stroke="#b04430" stroke-width="1.25"/>
<text x="390.6" y="403.03" font-size="3.4" fill="#6a4010" text-anchor="start" font-weight="bold" font-family="Liberation Sans, sans-serif" >SEG2</text>
<path d="M385.3 409.4H414.8L417.8 412.4L414.8 415.4H385.3Z" fill="#fff064" stroke="#b04430" stroke-width="1.25"/>
<text x="390.6" y="413.8" font-size="3.4" fill="#6a4010" text-anchor="start" font-weight="bold" font-family="Liberation Sans, sans-serif" >SEG3</text>
<path d="M385.3 441.7H414.8L417.8 444.7L414.8 447.7H385.3Z" fill="#fff064" stroke="#b04430" stroke-width="1.25"/>
<text x="390.6" y="446.1" font-size="3.4" fill="#6a4010" text-anchor="start" font-weight="bold" font-family="Liberation Sans, sans-serif" >SEG4</text>
<path d="M385.3 452.47H414.8L417.8 455.47L414.8 458.47H385.3Z" fill="#fff064" stroke="#b04430" stroke-width="1.25"/>
<text x="390.6" y="456.87" font-size="3.4" fill="#6a4010" text-anchor="start" font-weight="bold" font-family="Liberation Sans, sans-serif" >SEG5</text>
<path d="M385.3 463.24H414.8L417.8 466.24L414.8 469.24H385.3Z" fill="#fff064" stroke="#b04430" stroke-width="1.25"/>
<text x="390.6" y="467.64" font-size="3.4" fill="#6a4010" text-anchor="start" font-weight="bold" font-family="Liberation Sans, sans-serif" >SEG6</text>
<path d="M385.3 474.01H414.8L417.8 477.01L414.8 480.01H385.3Z" fill="#fff064" stroke="#b04430" stroke-width="1.25"/>
<text x="390.6" y="478.41" font-size="3.4" fill="#6a4010" text-anchor="start" font-weight="bold" font-family="Liberation Sans, sans-serif" >SEG7</text>
<path d="M38 355.9H66.8L69.6 358.56L66.8 361.4H38Z" fill="#e2e2e2" stroke="#303030" stroke-width="1.3"/>
<text x="53" y="359.96" font-size="3.5" fill="#101010" text-anchor="middle" font-weight="bold" font-family="Liberation Sans, sans-serif" >CLK_SEG</text>
<circle cx="25" cy="358.56" r="3.9" fill="#3a3ae8"/>
<circle cx="25" cy="358.56" r="2.2" fill="none" stroke="#f0f0ff" stroke-width="0.8"/>
<circle cx="529.3" cy="349.2" r="0.7" fill="#202020"/>
<g stroke="#505050" stroke-width="1.2" fill="none">
<path d="M595.7 487V444.8H782.6M595.7 460.7H782.6M595.7 477.2H782.6M595.7 482.7H782.6M622.6 460.7V477.2M730 460.7V477.2M703 477.2V487"/>
</g>
<text x="598.3" y="449.4" font-size="3.6" font-weight="bold" fill="#202020" font-family="Liberation Sans, sans-serif">Title</text>
<text x="598" y="465" font-size="3.6" font-weight="bold" fill="#202020" font-family="Liberation Sans, sans-serif">Size</text>
<text x="600.6" y="472.5" font-size="3.6" font-weight="bold" fill="#202020" font-family="Liberation Sans, sans-serif">A2</text>
<text x="625" y="465" font-size="3.6" font-weight="bold" fill="#202020" font-family="Liberation Sans, sans-serif">Number</text>
<text x="733" y="465" font-size="3.6" font-weight="bold" fill="#202020" font-family="Liberation Sans, sans-serif">Revision</text>
<text x="598" y="481" font-size="3.6" font-weight="bold" fill="#202020" font-family="Liberation Sans, sans-serif">Date:</text>
<text x="622" y="481" font-size="3.6" font-weight="bold" fill="#202020" font-family="Liberation Sans, sans-serif" textLength="18" lengthAdjust="spacingAndGlyphs">2/18/2013</text>
<text x="706" y="481" font-size="3.6" font-weight="bold" fill="#202020" font-family="Liberation Sans, sans-serif">Sheet</text>
<text x="722" y="481" font-size="3.6" font-weight="bold" fill="#202020" font-family="Liberation Sans, sans-serif">of</text>
<text x="598" y="486.2" font-size="3.6" font-weight="bold" fill="#202020" font-family="Liberation Sans, sans-serif">File:</text>
<text x="622" y="486.2" font-size="3.6" font-weight="bold" fill="#202020" font-family="Liberation Sans, sans-serif" textLength="50.5" lengthAdjust="spacingAndGlyphs">C:\Users\..\matrice.SchDoc</text>
<text x="706" y="486.2" font-size="3.6" font-weight="bold" fill="#202020" font-family="Liberation Sans, sans-serif">Drawn By:</text>
<path d="M3 487.2H782.6" stroke="#6a6a6a" stroke-width="1.3"/>
<path d="M3 496.4H795" stroke="#b4b4b4" stroke-width="1.3"/>
<path d="M64.15 487.2V496" stroke="#303030" stroke-width="1.1"/>
<path d="M168.01 487.2V496" stroke="#303030" stroke-width="1.1"/>
<path d="M271.87 487.2V496" stroke="#303030" stroke-width="1.1"/>
<path d="M375.73 487.2V496" stroke="#303030" stroke-width="1.1"/>
<path d="M479.59 487.2V496" stroke="#303030" stroke-width="1.1"/>
<path d="M583.45 487.2V496" stroke="#303030" stroke-width="1.1"/>
<path d="M687.31 487.2V496" stroke="#303030" stroke-width="1.1"/>
<text x="12.2" y="494.3" font-size="4" fill="#303030" text-anchor="middle" font-family="Liberation Sans, sans-serif">1</text>
<text x="116.06" y="494.3" font-size="4" fill="#303030" text-anchor="middle" font-family="Liberation Sans, sans-serif">2</text>
<text x="219.92" y="494.3" font-size="4" fill="#303030" text-anchor="middle" font-family="Liberation Sans, sans-serif">3</text>
<text x="323.78" y="494.3" font-size="4" fill="#303030" text-anchor="middle" font-family="Liberation Sans, sans-serif">4</text>
<text x="427.64" y="494.3" font-size="4" fill="#303030" text-anchor="middle" font-family="Liberation Sans, sans-serif">5</text>
<text x="531.5" y="494.3" font-size="4" fill="#303030" text-anchor="middle" font-family="Liberation Sans, sans-serif">6</text>
<text x="635.36" y="494.3" font-size="4" fill="#303030" text-anchor="middle" font-family="Liberation Sans, sans-serif">7</text>
<text x="739.22" y="494.3" font-size="4" fill="#303030" text-anchor="middle" font-family="Liberation Sans, sans-serif">8</text>
<rect x="795" y="22" width="5" height="475" fill="#ffffff"/>
<path d="M782.9 22V497" stroke="#8a8a8a" stroke-width="1.3"/>
<path d="M794.1 22V497" stroke="#6e6e6e" stroke-width="1.7"/>
<path d="M794.1 228.5V304.5" stroke="#1e1ea0" stroke-width="1.7"/>
<path d="M782.9 49.4H794" stroke="#303030" stroke-width="1.1"/>
<path d="M782.9 198.5H794" stroke="#303030" stroke-width="1.1"/>
<path d="M782.9 347.3H794" stroke="#303030" stroke-width="1.1"/>
<text x="788.4" y="128.6" font-size="4.2" font-weight="bold" fill="#402a10" text-anchor="middle" font-family="Liberation Sans, sans-serif">B</text>
<text x="788.4" y="277.6" font-size="4.2" font-weight="bold" fill="#402a10" text-anchor="middle" font-family="Liberation Sans, sans-serif">C</text>
<text x="788.4" y="426.6" font-size="4.2" font-weight="bold" fill="#402a10" text-anchor="middle" font-family="Liberation Sans, sans-serif">D</text>
</svg>
<div id="shadow"></div>
<div id="left"></div>
</body></html>
